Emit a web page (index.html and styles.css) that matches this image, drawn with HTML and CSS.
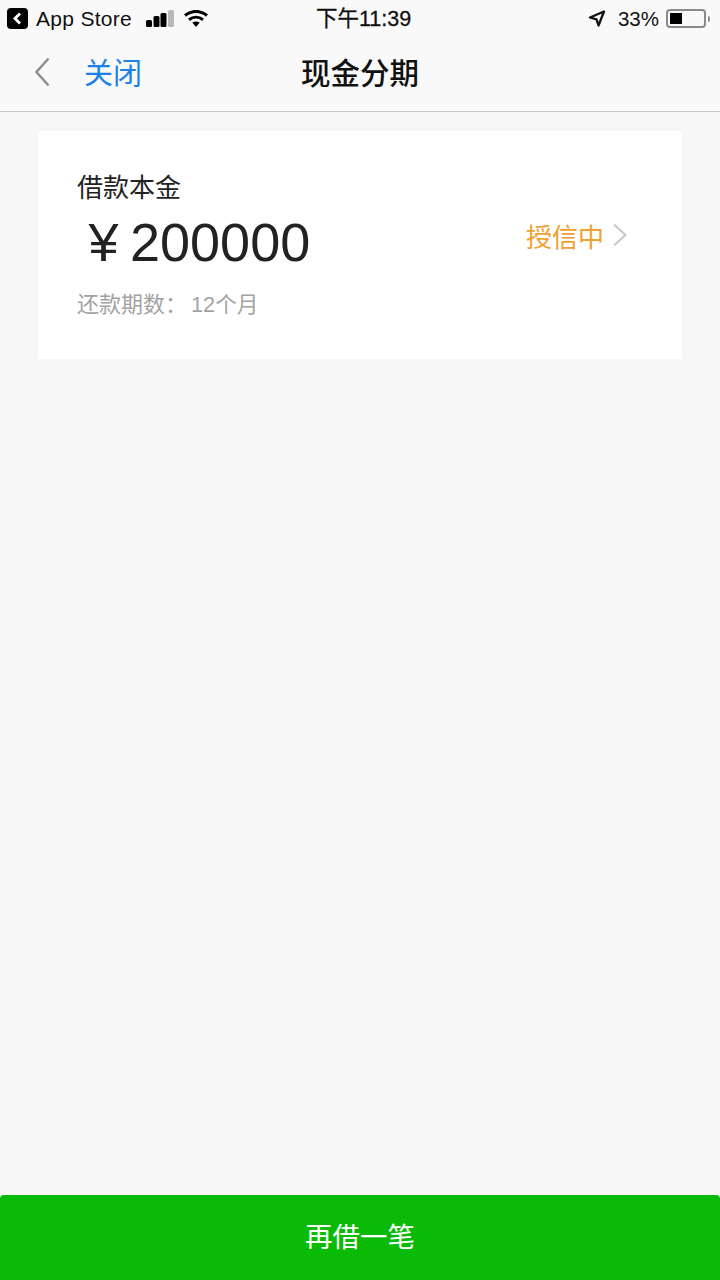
FILE: index.html
```html
<!DOCTYPE html>
<html lang="zh">
<head>
<meta charset="utf-8">
<title>现金分期</title>
<link rel="stylesheet" href="styles.css">
</head>
<body>
<div class="page">
  <header class="header">
    <div class="status">
      <div class="status-left">
        <span class="back-badge"><svg width="21" height="21" viewBox="0 0 21 21"><rect x="0" y="0" width="21" height="21" rx="4" fill="#000"/><path d="M13 5.500l-5 5 5 5" fill="none" stroke="#fff" stroke-width="2.800"/></svg></span>
        <span class="app-name">App Store</span>
        <svg class="signal" width="28" height="17" viewBox="0 0 28 17"><rect x="0" y="10" width="6" height="7" rx="1.500" fill="#000"/><rect x="7.500" y="6" width="6" height="11" rx="1.500" fill="#000"/><rect x="14.500" y="3" width="6" height="14" rx="1.500" fill="#000"/><rect x="22" y="0" width="6" height="17" rx="1.500" fill="#b9b9b9"/></svg>
        <svg class="wifi" width="24" height="17" viewBox="0 0 24 17"><path d="M1 5.500C7.500 0 16.500 0 23 5.500" fill="none" stroke="#000" stroke-width="3"/><path d="M5 9.700c4.300-3.300 9.700-3.300 14 0" fill="none" stroke="#000" stroke-width="3"/><path d="M8.300 12.600c2.200-1.400 5.200-1.400 7.400 0L12 17z" fill="#000"/></svg>
      </div>
      <div class="status-time">下午11:39</div>
      <div class="status-right">
        <svg class="arrow" width="18" height="17" viewBox="0 0 18 17"><path d="M16 1.500L2 7.500l6.500 1.800L10.500 15.500z" fill="none" stroke="#111" stroke-width="2.300" stroke-linejoin="round"/></svg>
        <span class="battery-text">33%</span>
        <span class="battery"><span class="battery-fill"></span></span>
        <span class="battery-tip"></span>
      </div>
    </div>
    <nav class="nav">
      <svg class="nav-back" width="18" height="30" viewBox="0 0 18 30"><path d="M15.500 1.500L3.500 15l12 13.500" fill="none" stroke="#8e8e8e" stroke-width="2.500"/></svg>
      <span class="nav-close">关闭</span>
      <h1 class="nav-title">现金分期</h1>
    </nav>
  </header>
  <main class="content">
    <section class="card">
      <div class="card-info">
        <div class="label">借款本金</div>
        <div class="amount"><span class="yen">¥</span>200000</div>
        <div class="term">还款期数：<span class="term-value">12个月</span></div>
      </div>
      <div class="state">
        <span>授信中</span>
        <svg width="16" height="24" viewBox="0 0 16 24"><path d="M2 1.500L13.500 12 2 22.500" fill="none" stroke="#c8c8c8" stroke-width="2"/></svg>
      </div>
    </section>
  </main>
  <button class="action">再借一笔</button>
</div>
</body>
</html>
```
FILE: styles.css
```css
* { box-sizing: border-box; }
html, body { margin: 0; padding: 0; }
body {
  width: 720px;
  height: 1280px;
  overflow: hidden;
  font-family: "Liberation Sans", "Noto Sans CJK SC", sans-serif;
  background: #f7f7f7;
}
.page { display: flex; flex-direction: column; height: 1280px; }
.header { height: 112px; background: #f9f9f9; border-bottom: 1px solid #c8c8c8; flex: none; }
.status {
  height: 37px;
  display: grid;
  grid-template-columns: 1fr auto 1fr;
  align-items: center;
  padding: 0 10px 0 7px;
  color: #111;
}
.status-left { display: flex; align-items: center; }
.back-badge { display: flex; width: 21px; height: 21px; }
.app-name { font-size: 21px; margin-left: 8px; letter-spacing: 0.3px; }
.signal { margin-left: 14px; }
.wifi { margin-left: 10px; }
.status-time { font-size: 21.500px; margin: -4px 0 0 10px; -webkit-text-stroke: 0.3px #111; }
.status-right { display: flex; align-items: center; justify-content: flex-end; }
.arrow { margin-right: 1px; }
.battery-text { font-size: 20.500px; margin-left: 11px; }
.battery {
  display: block;
  width: 40px;
  height: 19px;
  margin-left: 7px;
  padding: 2px;
  border: 2px solid #8a8a8a;
  border-radius: 4px;
}
.battery-fill { display: block; width: 12px; height: 100%; background: #000; }
.battery-tip { display: block; width: 2px; height: 6px; margin-left: 2px; background: #8a8a8a; border-radius: 0 2px 2px 0; }
.nav { position: relative; height: 74px; display: flex; align-items: center; padding: 0 0 4px 33px; }
.nav-back { flex: none; }
.nav-close { margin: -2px 0 0 33px; font-size: 29px; color: #1a82e8; }
.nav-title {
  position: absolute;
  left: 0;
  right: 0;
  margin: -2px 0 0;
  text-align: center;
  font-size: 29.500px;
  font-weight: 500;
  color: #111;
  pointer-events: none;
}
.content { flex: 1; padding: 19px 38px 0; }
.card {
  height: 228px;
  background: #fff;
  display: flex;
  justify-content: space-between;
  align-items: center;
  padding: 0 54px 0 39px;
}
.label { font-size: 26px; line-height: 32px; color: #222; }
.amount { font-size: 54px; line-height: 62px; margin-top: 7px; color: #222; display: flex; align-items: baseline; }
.yen { width: 53px; text-align: center; font-size: 54px; }
.term { font-size: 22px; line-height: 30px; margin-top: 17px; margin-bottom: -2px; color: #a3a3a3; }
.term-value { margin-left: 4px; font-size: 21.700px; }
.state { display: flex; align-items: center; gap: 8px; font-size: 26px; color: #f0a12e; margin-bottom: 20px; }
.action {
  flex: none;
  height: 85px;
  border: 0;
  padding: 0 0 6px;
  border-radius: 4px 4px 0 0;
  background: #09bb07;
  color: #fff;
  font: inherit;
  font-size: 27.500px;
}
```
